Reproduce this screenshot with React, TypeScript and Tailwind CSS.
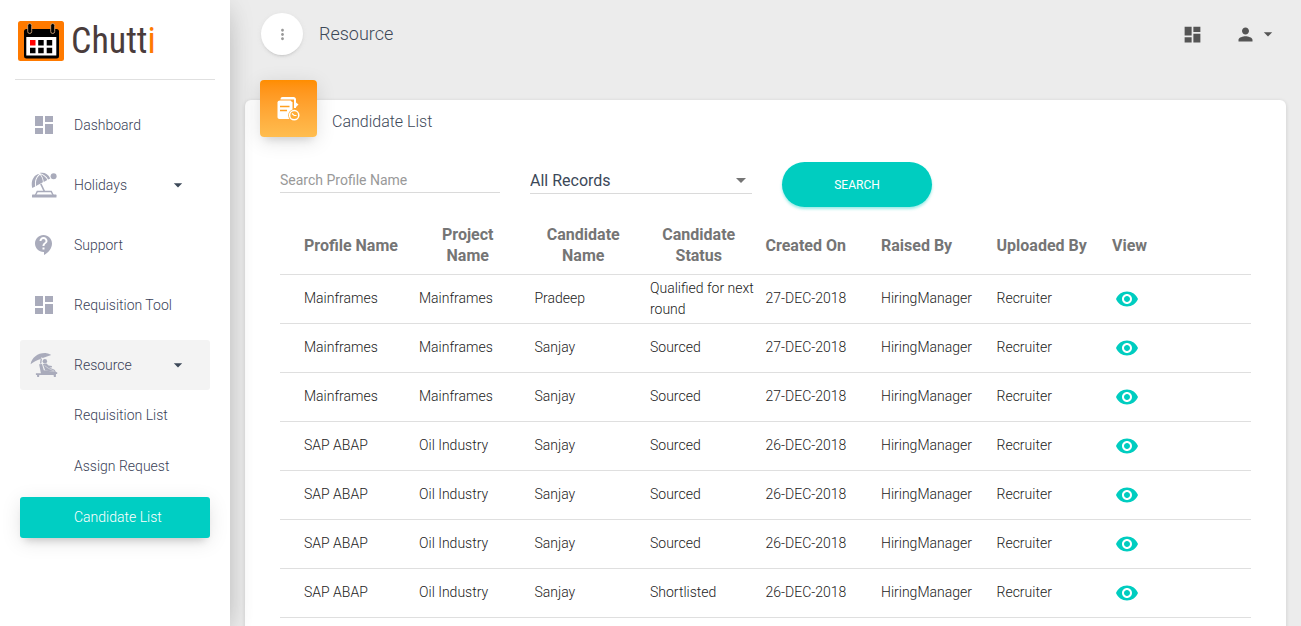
import type { ReactNode } from "react";
import {
  MdArrowDropDown,
  MdContactSupport,
  MdDashboard,
  MdMoreVert,
  MdPerson,
  MdRemoveRedEye,
} from "react-icons/md";

const headers = [
  "Profile Name",
  "Project Name",
  "Candidate Name",
  "Candidate Status",
  "Created On",
  "Raised By",
  "Uploaded By",
  "View",
];

const rows = [
  ["Mainframes", "Mainframes", "Pradeep", "Qualified for next round", "27-DEC-2018"],
  ["Mainframes", "Mainframes", "Sanjay", "Sourced", "27-DEC-2018"],
  ["Mainframes", "Mainframes", "Sanjay", "Sourced", "27-DEC-2018"],
  ["SAP ABAP", "Oil Industry", "Sanjay", "Sourced", "26-DEC-2018"],
  ["SAP ABAP", "Oil Industry", "Sanjay", "Sourced", "26-DEC-2018"],
  ["SAP ABAP", "Oil Industry", "Sanjay", "Sourced", "26-DEC-2018"],
  ["SAP ABAP", "Oil Industry", "Sanjay", "Shortlisted", "26-DEC-2018"],
].map((row) => [...row, "HiringManager", "Recruiter"]);

function CalendarLogo() {
  return (
    <svg viewBox="0 0 46 40" className="h-10 w-[46px]" aria-hidden="true">
      <rect width="46" height="40" rx="2.500" fill="#ff7a00" />
      <rect x="6" y="8" width="35" height="29.500" rx="2.500" fill="#000" />
      <rect x="8.300" y="16" width="30" height="18.500" fill="#fff" />
      <rect x="9.700" y="2.500" width="4" height="10" rx="2" fill="#000" stroke="#e0b080" strokeWidth="0.800" />
      <rect x="32.700" y="2.500" width="4" height="10" rx="2" fill="#000" stroke="#e0b080" strokeWidth="0.800" />
      <rect x="12" y="19" width="5.500" height="5.500" fill="#f00" />
      <path d="M20.200 19h5.500v5.500h-5.500zM28.700 19h5.500v5.500h-5.500zM12 26.800h5.500v5.500H12zM20.200 26.800h5.500v5.500h-5.500zM28.700 26.800h5.500v5.500h-5.500z" fill="#000" />
    </svg>
  );
}

function BeachIcon() {
  return (
    <svg viewBox="0 0 26 26" className="size-[26px]" fill="currentColor" aria-hidden="true">
      <path d="M1.200 16C-.4 9.500 2.200 3.700 7.200 1.900L8 2.300C4.400 5.500 3.400 9.500 4.200 14.400Z" />
      <path d="M5 13.900C4.400 9 5.600 5.500 8.900 2.800C10.800 4.700 11.700 7.200 11.900 10.300Z" />
      <path d="M9.600 2.200C12.700 3.500 15.500 5.500 16.300 7.900L12.700 9.900C12.500 6.800 11.400 4.300 9.600 2.200Z" />
      <path d="M8.400 1.100C12.500-.3 17.300 1.600 19.300 6.400L17.100 7.600C15.800 4.400 12.400 2.200 8.400 1.100Z" />
      <path d="M9.100 12.200L10.500 11.400L14.300 19.500H12.600Z" />
      <circle cx="22.600" cy="4.200" r="3" />
      <path d="M5.800 18.700H20.700L22.800 23H21.300L19.800 20.200H6.700L5.300 23H3.800Z" />
      <rect x="1" y="22.600" width="24.500" height="3" rx=".6" />
    </svg>
  );
}

function LoungerIcon() {
  return (
    <svg viewBox="0 0 28 26" className="h-[26px] w-7" fill="currentColor" aria-hidden="true">
      <path d="M.6 12.200C1.800 5.500 8.500.4 16.500 1.200C18.500 1.400 20.200 2.100 21.200 3L12.800 6L11.600 5.300L10.600 6.900C6.800 8.300 3.200 9.900.6 12.200Z" />
      <path d="M10.700 6.300L11.900 6.700L11.300 11.500L10 11.600Z" />
      <circle cx="14.900" cy="9.300" r="2.200" />
      <path d="M9.100 12.300L12 11.900L13.800 18.300L27.200 20.300V22H26L25.800 24.900H23.900L23.600 22.900H9.300L9 24.900H7.200L7 22.900H5.900V21.200H10.900Z" />
      <path d="M12.900 12L16.500 11.500L18.500 13.500L22 14L21.700 15.600L19.300 15.600L24.500 17.800L26 20L15.200 18.500Z" />
      <path d="M14.600 13.600L18.400 16.300L24 19" fill="none" stroke="#f3f3f3" strokeWidth="0.500" />
    </svg>
  );
}

function RequestIcon() {
  return (
    <svg viewBox="0 0 24 26" className="h-[26px] w-6" aria-hidden="true">
      <path d="M3.500 3.500C3.500 1.800 4.200 1 5.500 1H16.500C18 1 19 2 19 3.500V6.500L21.500 8.500L19 11V12H17V3.500Z" fill="#fff" />
      <path d="M3 4.500H13.500L15.500 6.500V23H2.500C1.200 23 .5 22.200 .5 21V6.500C.5 5.300 1.500 4.500 3 4.500Z" fill="#fff" />
      <path d="M3 10.500H12.500M3 14.500H10" stroke="#ffa021" strokeWidth="1.300" fill="none" />
      <circle cx="17.200" cy="19.200" r="6" fill="#ffad35" />
      <circle cx="17.200" cy="19.200" r="4.600" fill="#ffad35" stroke="#fff" strokeWidth="1.500" />
      <path d="M15 17.500L17.200 19.500H19.500" stroke="#fff" strokeWidth="1.200" fill="none" />
    </svg>
  );
}

function NavItem({ icon, label, expandable, open }: { icon: ReactNode; label: string; expandable?: boolean; open?: boolean }) {
  return (
    <a
      href="#"
      className={`flex h-[50px] items-center rounded-[3px] pr-[22px] pl-2.5 text-[#3c4858] ${open ? "bg-[#f3f3f3]" : ""}`}
    >
      <span className="flex w-7 justify-center text-[#a9abbb]">{icon}</span>
      <span className="ml-4 text-sm font-light whitespace-nowrap text-[#3a3f58]">{label}</span>
      {expandable && <MdArrowDropDown className="ml-auto size-5" />}
    </a>
  );
}

function SubItem({ label, active }: { label: string; active?: boolean }) {
  return (
    <a
      href="#"
      className={`block h-[41px] rounded-[3px] pl-[54px] text-sm leading-10 font-light ${
        active
          ? "bg-[#00cec3] text-white shadow-[0_4px_20px_0_rgba(0,0,0,0.1),0_7px_8px_-5px_rgba(0,0,0,0.18)]"
          : "text-[#3a3f58]"
      }`}
    >
      {label}
    </a>
  );
}

export default function App() {
  return (
    <div className="flex h-screen overflow-hidden bg-[#ececec] font-[Roboto,sans-serif] text-[#3c4858]">
      <aside className="z-10 w-[230px] shrink-0 bg-white shadow-[0_10px_30px_-12px_rgba(0,0,0,0.3),0_4px_25px_0_rgba(0,0,0,0.1)]">
        <div className="mx-[15px] flex h-20 items-center border-b border-[#e0e0e0] pt-[3px] pl-[3px]">
          <a href="#" className="flex items-center gap-[7px]">
            <CalendarLogo />
            <span className="font-['Roboto_Condensed','Open_Sans_Condensed','Noto_Sans_Condensed',Roboto,sans-serif] text-[36px] leading-10 text-[#4a3c3c]">
              Chutt<span className="text-[#ff7a00]">i</span>
            </span>
          </a>
        </div>
        <nav className="px-5 pt-5">
          <div className="flex flex-col gap-2.5">
            <NavItem icon={<MdDashboard className="size-6" />} label="Dashboard" />
            <NavItem icon={<BeachIcon />} label="Holidays" expandable />
            <NavItem icon={<MdContactSupport className="size-6" />} label="Support" />
            <NavItem icon={<MdDashboard className="size-6" />} label="Requisition Tool" />
            <NavItem icon={<LoungerIcon />} label="Resource" expandable open />
          </div>
          <div className="mt-[5px] flex flex-col gap-2.5">
            <SubItem label="Requisition List" />
            <SubItem label="Assign Request" />
            <SubItem label="Candidate List" active />
          </div>
        </nav>
      </aside>

      <main className="min-w-0 flex-1 overflow-y-auto px-[15px] [scrollbar-width:none]">
        <header className="flex h-[68px] items-center pr-2 pl-4">
          <button
            type="button"
            aria-label="Toggle menu"
            className="flex size-[42px] items-center justify-center rounded-full bg-white text-[#999] shadow-[0_2px_2px_0_rgba(153,153,153,0.14),0_3px_1px_-2px_rgba(153,153,153,0.2),0_1px_5px_0_rgba(153,153,153,0.12)]"
          >
            <MdMoreVert className="size-[17px]" />
          </button>
          <h1 className="ml-4 text-lg font-light">Resource</h1>
          <div className="ml-auto flex items-center text-[#555]">
            <button type="button" aria-label="Dashboard">
              <MdDashboard className="size-[21px]" />
            </button>
            <button type="button" aria-label="Account" className="ml-8 flex items-center">
              <MdPerson className="size-[21px]" />
              <MdArrowDropDown className="ml-0.5 size-5" />
            </button>
          </div>
        </header>

        <section className="mt-8 rounded-md bg-white px-[35px] pb-10 shadow-[0_1px_4px_0_rgba(0,0,0,0.14)]">
          <div className="-ml-5 flex items-start gap-[15px] pb-[25px]">
            <span className="-mt-5 flex size-[57px] items-center justify-center rounded bg-linear-to-b from-[#ff8d00] to-[#ffbd4f] shadow-[0_4px_20px_0_rgba(0,0,0,0.12),0_7px_8px_-5px_rgba(0,0,0,0.12)]">
              <RequestIcon />
            </span>
            <h2 className="mt-[10px] text-base leading-6 font-light">Candidate List</h2>
          </div>

          <form className="flex items-start gap-[30px]" onSubmit={(event) => event.preventDefault()}>
            <input
              type="text"
              aria-label="Search Profile Name"
              placeholder="Search Profile Name"
              className="mt-1.5 h-[25px] w-[220px] border-b border-[#dadada] text-sm placeholder:text-[#999]"
            />
            <div className="relative mt-1.5 w-[222px]">
              <select
                aria-label="Record filter"
                className="h-[26px] w-full appearance-none border-b border-[#dadada] text-base leading-6"
              >
                <option>All Records</option>
              </select>
              <MdArrowDropDown className="pointer-events-none absolute top-0 -right-px size-6 text-[#757575]" />
            </div>
            <button
              type="submit"
              className="h-[45px] w-[150px] rounded-full bg-[#00cdc0] text-xs text-white shadow-[0_2px_3px_0_rgba(0,205,192,0.4)]"
            >
              SEARCH
            </button>
          </form>

          <table className="mt-2.5 w-full table-fixed border-collapse text-left">
            <thead>
              <tr className="h-[57px] border-b border-[#dfdfdf] text-base leading-[21px] text-[#757575]">
                {headers.map((header) => (
                  <th
                    key={header}
                    scope="col"
                    className="p-0 pr-[18px] align-middle font-bold first:w-[139px] first:pl-6 last:w-[139px]"
                  >
                    <button type="button" className="text-center">
                      {header}
                    </button>
                  </th>
                ))}
              </tr>
            </thead>
            <tbody>
              {rows.map((row, index) => (
                <tr key={index} className="h-[49px] border-b border-[#dfdfdf] text-sm leading-[21px] font-light text-[#222]">
                  {row.map((cell, column) => (
                    <td key={column} className="p-0 first:pl-6">
                      {cell}
                    </td>
                  ))}
                  <td className="p-0 pl-[3px]">
                    <button type="button" aria-label="View candidate" className="block text-[#00cdc0]">
                      <MdRemoveRedEye className="size-6" />
                    </button>
                  </td>
                </tr>
              ))}
            </tbody>
          </table>
        </section>
      </main>
    </div>
  );
}
